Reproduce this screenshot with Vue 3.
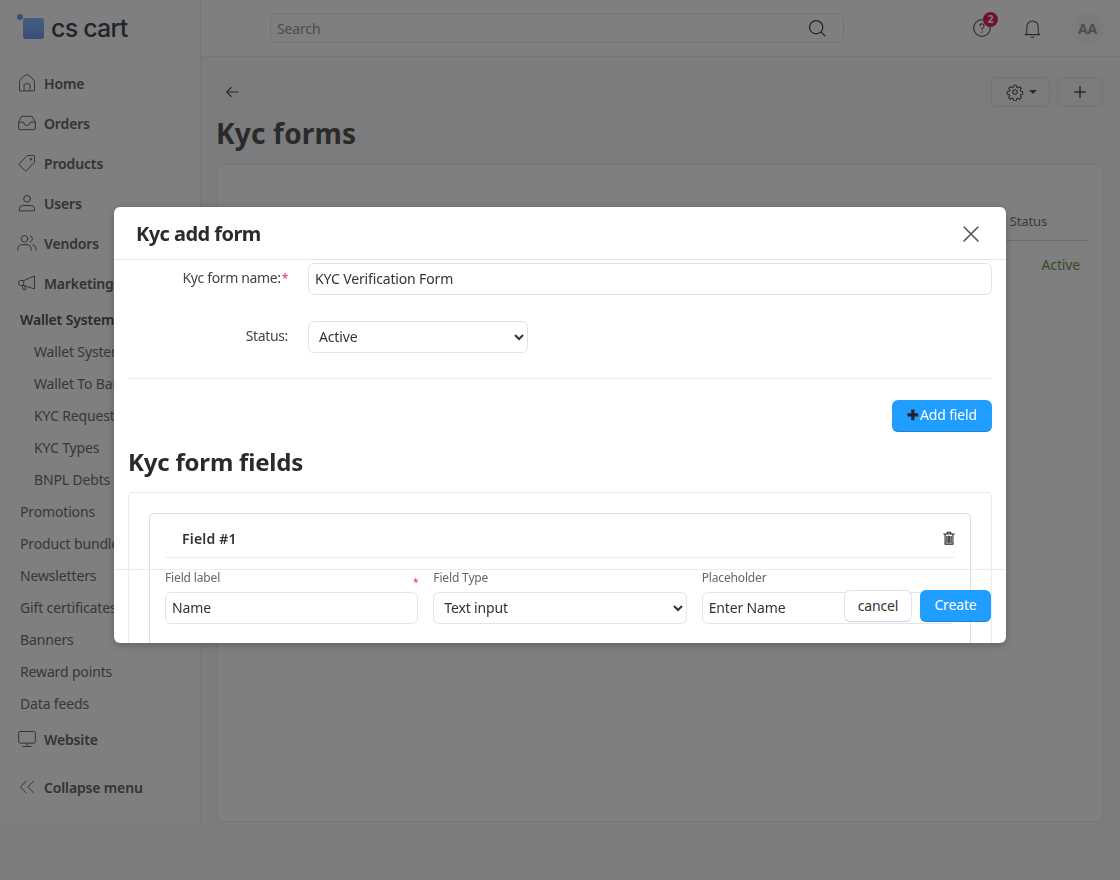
<template>
  <div class="app">
    <aside class="sidebar">
      <div class="logo">
        <span class="logo-dot"></span>
        <span class="logo-mark"></span>
        <span class="logo-text">cs cart</span>
      </div>
      <nav class="menu">
        <a v-for="item in mainItems" :key="item.label" class="menu-item">
          <svg viewBox="0 0 24 24" class="menu-icon" v-html="item.icon"></svg>
          <span>{{ item.label }}</span>
        </a>
        <div class="group-title">Wallet System</div>
        <a v-for="item in walletItems" :key="item" class="sub-item">{{ item }}</a>
        <a v-for="item in plainItems" :key="item" class="plain-item">{{ item }}</a>
        <a class="menu-item website">
          <svg viewBox="0 0 24 24" class="menu-icon"><rect x="2" y="3" width="20" height="14" rx="2" /><path d="M12 17v4M7 21h10" /></svg>
          <span>Website</span>
        </a>
        <a class="menu-item collapse">
          <svg viewBox="0 0 24 24" class="menu-icon"><path d="M11 5l-7 7 7 7M20 5l-7 7 7 7" /></svg>
          <span>Collapse menu</span>
        </a>
      </nav>
    </aside>

    <div class="main">
      <header class="topbar">
        <div class="search">
          <span>Search</span>
          <svg viewBox="0 0 24 24" class="search-icon"><circle cx="11" cy="11" r="8" /><path d="M17 17l4.500 4.500" /></svg>
        </div>
        <div class="top-actions">
          <div class="help">
            <svg viewBox="0 0 24 24"><circle cx="12" cy="12" r="10" /><path d="M9.500 9.500a2.500 2.500 0 1 1 3.600 2.200c-.8.400-1.100 1-1.100 1.800M12 16.500v.5" /></svg>
            <span class="badge">2</span>
          </div>
          <svg viewBox="0 0 24 24" class="bell"><path d="M5.500 17.500V10a6.500 6.500 0 0 1 13 0v7.500l2 1.500h-17zM10.500 22h3" /></svg>
          <div class="avatar">AA</div>
        </div>
      </header>

      <main class="content">
        <div class="page-actions">
          <svg viewBox="0 0 24 24" class="back"><path d="M20 12H5M11 6l-6 6 6 6" /></svg>
          <div class="page-buttons">
            <button class="tool-btn gear-btn">
              <svg viewBox="0 0 24 24"><circle cx="12" cy="12" r="3" /><path d="M10.300 3h3.400l.5 2.600 1.700.7 2.200-1.500 2.400 2.400-1.500 2.200.7 1.700 2.600.5v3.400l-2.600.5-.7 1.700 1.500 2.200-2.400 2.400-2.200-1.500-1.700.7-.5 2.600h-3.400l-.5-2.600-1.700-.7-2.200 1.500-2.400-2.400 1.500-2.200-.7-1.700-2.600-.5v-3.400l2.600-.5.700-1.700-1.500-2.200 2.400-2.400 2.200 1.500 1.700-.7z" /></svg>
              <i class="caret"></i>
            </button>
            <button class="tool-btn plus-btn">
              <svg viewBox="0 0 24 24"><path d="M12 5v14M5 12h14" /></svg>
            </button>
          </div>
        </div>
        <h1 class="page-title">Kyc forms</h1>
        <section class="card">
          <div class="table-head">Status</div>
          <div class="table-cell">Active</div>
        </section>
      </main>
    </div>

    <div class="backdrop">
      <div class="modal">
        <div class="modal-header">
          <h2>Kyc add form</h2>
          <svg viewBox="0 0 24 24" class="close"><path d="M5 5l14 14M19 5L5 19" /></svg>
        </div>
        <div class="modal-body">
          <div class="form-row">
            <label>Kyc form name:<em>*</em></label>
            <input class="name-input" value="KYC Verification Form" />
          </div>
          <div class="form-row status-row">
            <label>Status:</label>
            <select class="status-select"><option>Active</option></select>
          </div>
          <hr />
          <div class="add-row">
            <button class="btn-primary add-btn"><b>✚</b>Add field</button>
          </div>
          <h3>Kyc form fields</h3>
          <div class="fields-box">
            <div class="field-card">
              <div class="field-head">
                <strong>Field #1</strong>
                <svg viewBox="0 0 16 16" class="trash"><path d="M2 3.500h12M6 3.500V1.500h4v2M3.500 3.500v11.500h9V3.500M5.500 6v7M7.200 6v7M8.800 6v7M10.500 6v7" /></svg>
              </div>
              <div class="field-grid">
                <div class="field">
                  <label>Field label<em>*</em></label>
                  <input value="Name" />
                </div>
                <div class="field">
                  <label>Field Type</label>
                  <select><option>Text input</option></select>
                </div>
                <div class="field">
                  <label>Placeholder</label>
                  <input value="Enter Name" />
                </div>
              </div>
            </div>
          </div>
        </div>
        <div class="modal-footer">
          <button class="btn-cancel">cancel</button>
          <button class="btn-primary create-btn">Create</button>
        </div>
      </div>
    </div>
  </div>
</template>

<script setup>
const mainItems = [
  { label: 'Home', icon: '<path d="M3 21V10.500C3 9 8 3 12 2c4 1 9 7 9 8.500V21zM8.500 21v-7a1 1 0 0 1 1-1h5a1 1 0 0 1 1 1v7" />' },
  { label: 'Orders', icon: '<path d="M6 4h12l4 7v7a2 2 0 0 1-2 2H4a2 2 0 0 1-2-2v-7zM2 11h6a4 4 0 0 0 8 0h6" />' },
  { label: 'Products', icon: '<path d="M13 3h7a1 1 0 0 1 1 1v7l-9.500 10a1.500 1.500 0 0 1-2 0L3 14.500a1.500 1.500 0 0 1 0-2z" /><circle cx="16.500" cy="7.500" r="1" />' },
  { label: 'Users', icon: '<circle cx="12" cy="7" r="4" /><path d="M3 21v-2a4 4 0 0 1 4-4h10a4 4 0 0 1 4 4v2z" />' },
  { label: 'Vendors', icon: '<circle cx="9" cy="7" r="4" /><path d="M1 21v-2a5 5 0 0 1 5-5h6a5 5 0 0 1 5 5v2M16 3.300a4 4 0 0 1 0 7.400M19 14.300a5 5 0 0 1 4 4.700v2" />' },
  { label: 'Marketing', icon: '<path d="M21 4v15L8 15H4a2 2 0 0 1-2-2v-2a2 2 0 0 1 2-2h4zM8 9v6M6 15l1.500 5h3l-1-4" />' },
]
const walletItems = ['Wallet System', 'Wallet To Bank', 'KYC Requests', 'KYC Types', 'BNPL Debts']
const plainItems = ['Promotions', 'Product bundles', 'Newsletters', 'Gift certificates', 'Banners', 'Reward points', 'Data feeds']
</script>

<style>
html,
body {
  margin: 0;
  background: #f6f9fb;
}
</style>

<style scoped>
.app {
  display: flex;
  height: 880px;
  overflow: hidden;
  font-family: "Noto Sans", "Open Sans", sans-serif;
  font-size: 14px;
  letter-spacing: -0.15px;
  color: #333;
}

svg {
  fill: none;
  stroke: currentColor;
  stroke-width: 1.5;
  stroke-linecap: round;
  stroke-linejoin: round;
}

.sidebar {
  width: 200px;
  height: 823px;
  flex-shrink: 0;
  background: #fff;
  border-right: 1px solid #e8ecef;
}

.logo {
  display: flex;
  align-items: center;
  height: 56px;
  padding-left: 17px;
}

.logo-dot {
  width: 6px;
  height: 6px;
  border-radius: 50%;
  background: #6f9fe8;
  margin-bottom: 23px;
}

.logo-mark {
  width: 21px;
  height: 21px;
  border-radius: 3px;
  background: linear-gradient(#82c0ff, #7a98ee);
  margin: 1px 7px 0 0;
}

.logo-text {
  font-family: Inter, sans-serif;
  font-size: 25px;
  font-weight: 500;
  letter-spacing: -0.8px;
  color: #3c4a5c;
}

.menu {
  display: flex;
  flex-direction: column;
  padding-top: 7px;
}

.menu-item {
  display: flex;
  align-items: center;
  gap: 7px;
  height: 40px;
  padding-left: 17px;
  font-weight: 600;
  color: #666;
}

.menu-icon {
  width: 20px;
  height: 20px;
  color: #6a6a6a;
  stroke-width: 1.2;
}

.group-title {
  height: 32px;
  margin-top: 1px;
  line-height: 32px;
  padding-left: 20px;
  font-weight: 600;
  color: #555;
  white-space: nowrap;
}

.sub-item,
.plain-item {
  height: 32px;
  line-height: 32px;
  color: #707070;
  white-space: nowrap;
}

.sub-item {
  padding-left: 34px;
}

.plain-item {
  padding-left: 20px;
}

.website {
  margin-top: -1px;
}

.collapse {
  margin-top: 8px;
}

.main {
  flex: 1;
  min-width: 0;
}

.topbar {
  display: flex;
  align-items: center;
  height: 56px;
  padding: 0 16px 0 69px;
  background: #fff;
  border-bottom: 1px solid #e8ecef;
}

.search {
  display: flex;
  align-items: center;
  justify-content: space-between;
  width: 574px;
  height: 30px;
  box-sizing: border-box;
  padding: 0 16px 0 6px;
  border: 1px solid #e3e6ea;
  border-radius: 6px;
  color: #999;
}

.search-icon {
  width: 20px;
  height: 20px;
  color: #444;
}

.top-actions {
  display: flex;
  align-items: center;
  margin-left: auto;
}

.help {
  position: relative;
  width: 20px;
  height: 20px;
  margin-right: 30px;
  color: #666;
}

.help svg {
  display: block;
  width: 20px;
  height: 20px;
}

.badge {
  position: absolute;
  top: -6px;
  right: -6px;
  width: 15px;
  height: 15px;
  border-radius: 50%;
  background: #e0245e;
  color: #fff;
  font-size: 10px;
  font-weight: 700;
  line-height: 15px;
  text-align: center;
}

.bell {
  width: 21px;
  height: 21px;
  margin-right: 28px;
  color: #555;
  stroke-width: 1.2;
}

.avatar {
  width: 33px;
  height: 33px;
  border-radius: 50%;
  background: #f4f6f8;
  color: #9a9a9a;
  font-weight: 700;
  font-size: 14px;
  line-height: 33px;
  text-align: center;
}

.content {
  padding: 19px 17px 0 16px;
}

.page-actions {
  display: flex;
  align-items: flex-start;
  justify-content: space-between;
  height: 32px;
}

.back {
  width: 18px;
  height: 18px;
  margin: 7px 0 0 6px;
  color: #555;
}

.page-buttons {
  display: flex;
  gap: 7px;
  margin-top: 1px;
}

.tool-btn {
  display: flex;
  align-items: center;
  justify-content: center;
  height: 30px;
  padding: 0;
  border: 1px solid #e4e7ea;
  border-radius: 5px;
  background: #f6f9fb;
  color: #555;
}

.gear-btn {
  gap: 5px;
  width: 59px;
  padding-left: 2px;
}

.gear-btn svg {
  width: 18px;
  height: 18px;
  stroke-width: 1.4;
}

.plus-btn {
  width: 46px;
}

.plus-btn svg {
  width: 18px;
  height: 18px;
  stroke-width: 2;
}

.caret {
  width: 0;
  height: 0;
  border: 4px solid transparent;
  border-top-color: #555;
  border-bottom: 0;
}

.page-title {
  margin: 6px 0 12px -1px;
  font-size: 28px;
  line-height: 38px;
  font-weight: 700;
  letter-spacing: 0.2px;
  color: #555;
}

.card {
  height: 658px;
  box-sizing: border-box;
  border: 1px solid #e8ecef;
  border-radius: 6px;
  background: #fff;
  text-align: right;
}

.table-head {
  margin: 47px 14px 0 0;
  height: 29px;
  box-sizing: border-box;
  border-bottom: 1px solid #ddd;
  padding-right: 41px;
  font-size: 13px;
  color: #777;
}

.table-cell {
  margin-top: 14px;
  padding-right: 22px;
  color: #6c9a4a;
}

.backdrop {
  position: fixed;
  inset: 0;
  display: flex;
  justify-content: center;
  align-items: flex-start;
  padding-top: 207px;
  background: rgba(0, 0, 0, 0.5);
}

.modal {
  position: relative;
  width: 892px;
  height: 436px;
  overflow: hidden;
  background: #fff;
  border-radius: 6px;
  box-shadow: 0 2px 8px rgba(0, 0, 0, 0.25);
}

.modal-header {
  display: flex;
  align-items: center;
  justify-content: space-between;
  height: 52px;
  padding: 0 23px 0 22px;
  border-bottom: 1px solid #e3e8ec;
}

.modal-header h2 {
  margin: 0;
  font-size: 20px;
  font-weight: 700;
  letter-spacing: -0.55px;
  color: #2b2b2b;
}

.close {
  width: 24px;
  height: 24px;
  margin-top: 1px;
  color: #555;
  stroke-width: 1.6;
}

.modal-body {
  padding: 3px 14px 0;
}

.form-row {
  display: flex;
  align-items: center;
  gap: 20px;
  height: 32px;
}

.form-row label {
  width: 160px;
  padding-bottom: 3px;
  text-align: right;
  letter-spacing: -0.35px;
  color: #444;
}

.form-row label em {
  font-style: normal;
  font-size: 12px;
  margin-left: 1px;
  color: #e0314b;
}

.status-row {
  margin-top: 26px;
}

.name-input,
.status-select,
.field input,
.field select {
  box-sizing: border-box;
  height: 32px;
  border: 1px solid #dfe5ea;
  border-radius: 6px;
  background: #fff;
  font: inherit;
  letter-spacing: inherit;
  color: #333;
  outline: none;
}

.name-input {
  flex: 1;
  padding: 0 6px 2px;
}

.status-select {
  width: 220px;
  padding: 0 6px 2px;
}

hr {
  margin: 25px 0 21px;
  border: 0;
  border-top: 1px solid #eceeef;
}

.add-row {
  display: flex;
  justify-content: flex-end;
}

.btn-primary {
  height: 32px;
  padding: 0 14px 2px;
  border: 0;
  border-bottom: 1px solid #1886d8;
  border-radius: 6px;
  background: #1f9eff;
  color: #fff;
  font: inherit;
  letter-spacing: inherit;
}

.add-btn {
  width: 100px;
  padding: 0 0 2px;
}

.add-btn b {
  margin-right: 1px;
  color: #223;
  font-size: 14px;
}

.create-btn {
  width: 71px;
  padding: 0 0 2px;
}

h3 {
  margin: 13px 0 13px;
  font-size: 24px;
  line-height: 34px;
  font-weight: 700;
  letter-spacing: -0.2px;
  color: #2b2b2b;
}

.fields-box {
  padding: 20px;
  border: 1px solid #e8ecef;
  border-radius: 4px;
}

.field-card {
  padding: 0 15px 30px;
  border: 1px solid #d9dfe4;
  border-radius: 4px;
}

.field-head {
  display: flex;
  align-items: center;
  justify-content: space-between;
  height: 38px;
  padding: 5px 0 0 17px;
  border-bottom: 1px solid #eceeef;
}

.field-head strong {
  font-weight: 600;
  letter-spacing: 0.2px;
  color: #333;
}

.trash {
  width: 14px;
  height: 14px;
  margin-right: -1px;
  stroke-width: 1.2;
  color: #222;
}

.field-grid {
  display: grid;
  grid-template-columns: repeat(3, 1fr);
  gap: 15px;
  padding-top: 12px;
}

.field {
  display: flex;
  flex-direction: column;
  gap: 6px;
}

.field label {
  display: flex;
  justify-content: space-between;
  height: 16px;
  font-size: 12px;
  line-height: 16px;
  color: #666;
}

.field label em {
  font-style: normal;
  font-size: 10px;
  padding-top: 4px;
  color: #e0314b;
}

.field input,
.field select {
  padding: 0 6px 1px;
}

.modal-footer {
  position: absolute;
  left: 0;
  right: 0;
  bottom: 0;
  height: 74px;
  display: flex;
  justify-content: flex-end;
  align-items: flex-start;
  gap: 8px;
  padding: 20px 15px 0 0;
  box-sizing: border-box;
  border-top: 1px solid #e9edf0;
}

.btn-cancel {
  width: 68px;
  height: 32px;
  padding: 0 0 2px;
  border: 1px solid #dfe5ea;
  border-bottom-color: #cdd6de;
  border-radius: 6px;
  background: #fff;
  color: #333;
  font: inherit;
  letter-spacing: inherit;
}
</style>
